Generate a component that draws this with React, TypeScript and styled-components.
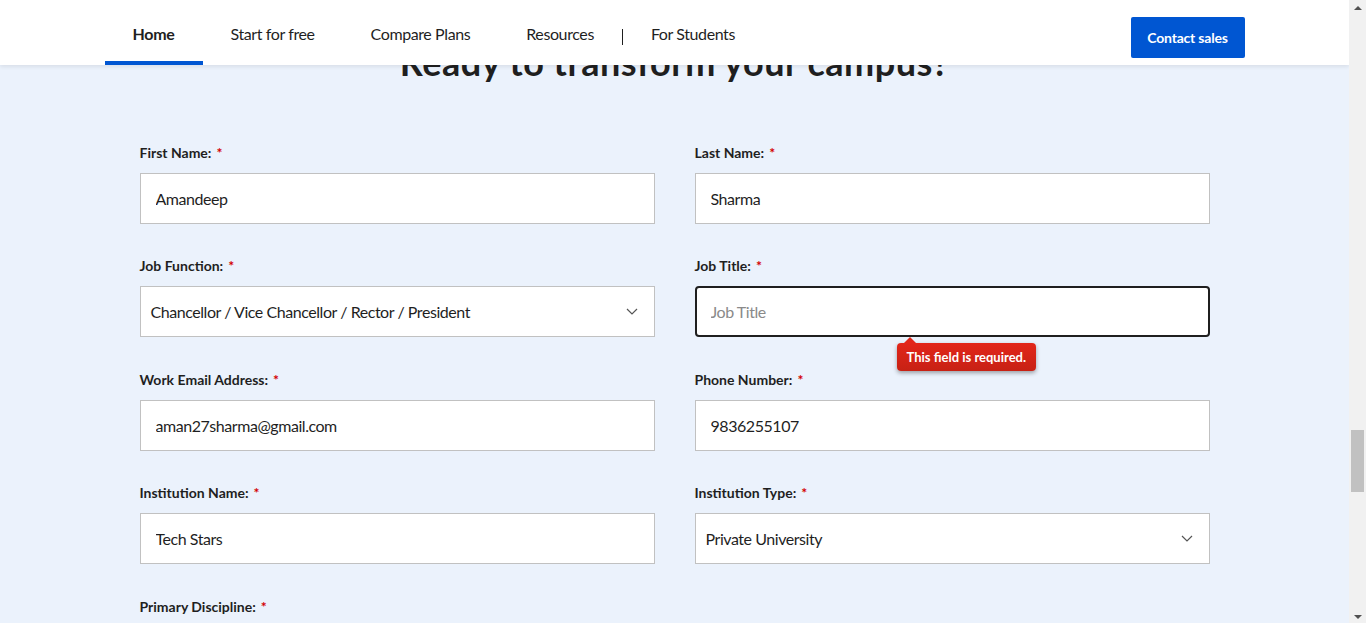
import React from "react";
import styled, { createGlobalStyle } from "styled-components";

const Global = createGlobalStyle`
  html, body { margin: 0; padding: 0; height: 100%; overflow: hidden; }
  body { font-family: Lato, "Liberation Sans", sans-serif; color: #1f1f1f; background: #ebf2fc; }
  * { box-sizing: border-box; }
`;

const Shell = styled.div`
  display: flex;
  width: 1366px;
  height: 623px;
  overflow: hidden;
`;

const Page = styled.div`
  flex: 1;
  display: flex;
  flex-direction: column;
  background: #ebf2fc;
  overflow: hidden;
`;

const NavBar = styled.header`
  position: relative;
  z-index: 2;
  height: 65px;
  flex: none;
  background: #fff;
  box-shadow: 0 2px 4px rgba(0, 0, 0, 0.08);
`;

const NavInner = styled.div`
  width: 1140px;
  height: 100%;
  margin: 0 auto;
  display: flex;
  align-items: stretch;
  justify-content: space-between;
`;

const NavList = styled.nav`
  display: flex;
  align-items: stretch;
`;

const NavItem = styled.a<{ $active?: boolean }>`
  position: relative;
  display: flex;
  align-items: center;
  padding: 3px 28px 0;
  font-size: 16px;
  line-height: 18px;
  letter-spacing: ${(p) => (p.$active ? "-0.3px" : "-0.4px")};
  font-weight: ${(p) => (p.$active ? 700 : 400)};
  color: #1f1f1f;
  text-decoration: none;
  &::after {
    content: "";
    position: absolute;
    left: 0;
    right: 0;
    bottom: 0;
    height: 4px;
    background: ${(p) => (p.$active ? "#0056d2" : "transparent")};
  }
`;

const NavSep = styled.span`
  align-self: center;
  width: 1px;
  height: 16px;
  margin-top: 9px;
  background: #1f1f1f;
`;

const ContactBtn = styled.button`
  align-self: center;
  margin-top: 10px;
  width: 114px;
  height: 41px;
  border: none;
  border-radius: 2px;
  background: #0056d2;
  color: #fff;
  font-family: inherit;
  font-size: 14px;
  font-weight: 700;
  letter-spacing: -0.2px;
`;

const Content = styled.main`
  position: relative;
  z-index: 1;
  display: flex;
  flex-direction: column;
  align-items: center;
`;

const Heading = styled.h2`
  margin: -18px 0 0;
  font-size: 36px;
  line-height: 30px;
  letter-spacing: 0.5px;
  font-weight: 700;
  color: #1f1f1f;
`;

const FormGrid = styled.form`
  margin-top: 66px;
  display: grid;
  grid-template-columns: 515px 515px;
  column-gap: 40px;
  row-gap: 32.4px;
`;

const Field = styled.div`
  position: relative;
  display: flex;
  flex-direction: column;
`;

const Label = styled.label`
  font-size: 14px;
  line-height: 20px;
  font-weight: 700;
  color: #1f1f1f;
  margin-bottom: 10px;
`;

const Star = styled.span`
  color: #d30001;
  margin-left: 5px;
`;

const Input = styled.input<{ $focused?: boolean }>`
  height: 51px;
  width: 100%;
  padding: 0 ${(p) => (p.$focused ? 14 : 15)}px;
  border: ${(p) => (p.$focused ? "2px solid #1f1f1f" : "1px solid #c1c1c1")};
  border-radius: ${(p) => (p.$focused ? "4px" : "0")};
  background: #fff;
  font-family: inherit;
  font-size: 16px;
  letter-spacing: -0.45px;
  color: #1f1f1f;
  outline: none;
  &::placeholder { color: #8a8a8a; }
`;

const SelectBox = styled.div`
  height: 51px;
  display: flex;
  align-items: center;
  justify-content: space-between;
  padding: 0 16px 0 10px;
  border: 1px solid #c1c1c1;
  background: #fff;
  font-size: 16px;
  letter-spacing: -0.45px;
  color: #1f1f1f;
`;

const Tooltip = styled.div`
  position: absolute;
  left: 202px;
  top: 87px;
  padding: 0 10px;
  height: 28px;
  display: flex;
  align-items: center;
  border-radius: 4px;
  background: linear-gradient(#e2261a, #c72114);
  color: #fff;
  font-size: 13px;
  font-weight: 700;
  white-space: nowrap;
  box-shadow: 0 2px 4px rgba(0, 0, 0, 0.35);
  &::before {
    content: "";
    position: absolute;
    left: 7px;
    top: -6px;
    border-left: 6px solid transparent;
    border-right: 6px solid transparent;
    border-bottom: 6px solid #e2261a;
  }
`;

const ScrollTrack = styled.div`
  width: 17px;
  flex: none;
  background: #f1f1f1;
  display: flex;
  flex-direction: column;
  align-items: center;
  padding: 6px 0 4px;
`;

const ScrollThumb = styled.div`
  width: 13px;
  height: 62px;
  margin-top: 420px;
  background: #c1c1c1;
`;

const Arrow = styled.div<{ $down?: boolean }>`
  width: 0;
  height: 0;
  border-left: 4px solid transparent;
  border-right: 4px solid transparent;
  ${(p) =>
    p.$down
      ? "border-top: 4px solid #505050; margin-top: auto;"
      : "border-bottom: 4px solid #505050;"}
`;

const Chevron = () => (
  <svg width="12" height="7" viewBox="0 0 12 7" fill="none">
    <polyline points="1,1 6,6 11,1" stroke="#555" strokeWidth="1.2" />
  </svg>
);

const TextField = ({ label, value }: { label: string; value: string }) => (
  <Field>
    <Label>
      {label}
      <Star>*</Star>
    </Label>
    <Input defaultValue={value} readOnly />
  </Field>
);

const SelectField = ({ label, value }: { label: string; value: string }) => (
  <Field>
    <Label>
      {label}
      <Star>*</Star>
    </Label>
    <SelectBox>
      <span>{value}</span>
      <Chevron />
    </SelectBox>
  </Field>
);

export default function App() {
  return (
    <>
      <Global />
      <Shell>
        <Page>
          <NavBar>
            <NavInner>
              <NavList>
                <NavItem $active>Home</NavItem>
                <NavItem>Start for free</NavItem>
                <NavItem>Compare Plans</NavItem>
                <NavItem>Resources</NavItem>
                <NavSep />
                <NavItem>For Students</NavItem>
              </NavList>
              <ContactBtn>Contact sales</ContactBtn>
            </NavInner>
          </NavBar>
          <Content>
            <Heading>Ready to transform your campus?</Heading>
            <FormGrid>
              <TextField label="First Name:" value="Amandeep" />
              <TextField label="Last Name:" value="Sharma" />
              <SelectField
                label="Job Function:"
                value="Chancellor / Vice Chancellor / Rector / President"
              />
              <Field>
                <Label>
                  Job Title:<Star>*</Star>
                </Label>
                <Input $focused placeholder="Job Title" />
                <Tooltip>This field is required.</Tooltip>
              </Field>
              <TextField label="Work Email Address:" value="aman27sharma@gmail.com" />
              <TextField label="Phone Number:" value="9836255107" />
              <TextField label="Institution Name:" value="Tech Stars" />
              <SelectField label="Institution Type:" value="Private University" />
              <Field>
                <Label>
                  Primary Discipline:<Star>*</Star>
                </Label>
              </Field>
            </FormGrid>
          </Content>
        </Page>
        <ScrollTrack>
          <Arrow />
          <ScrollThumb />
          <Arrow $down />
        </ScrollTrack>
      </Shell>
    </>
  );
}
